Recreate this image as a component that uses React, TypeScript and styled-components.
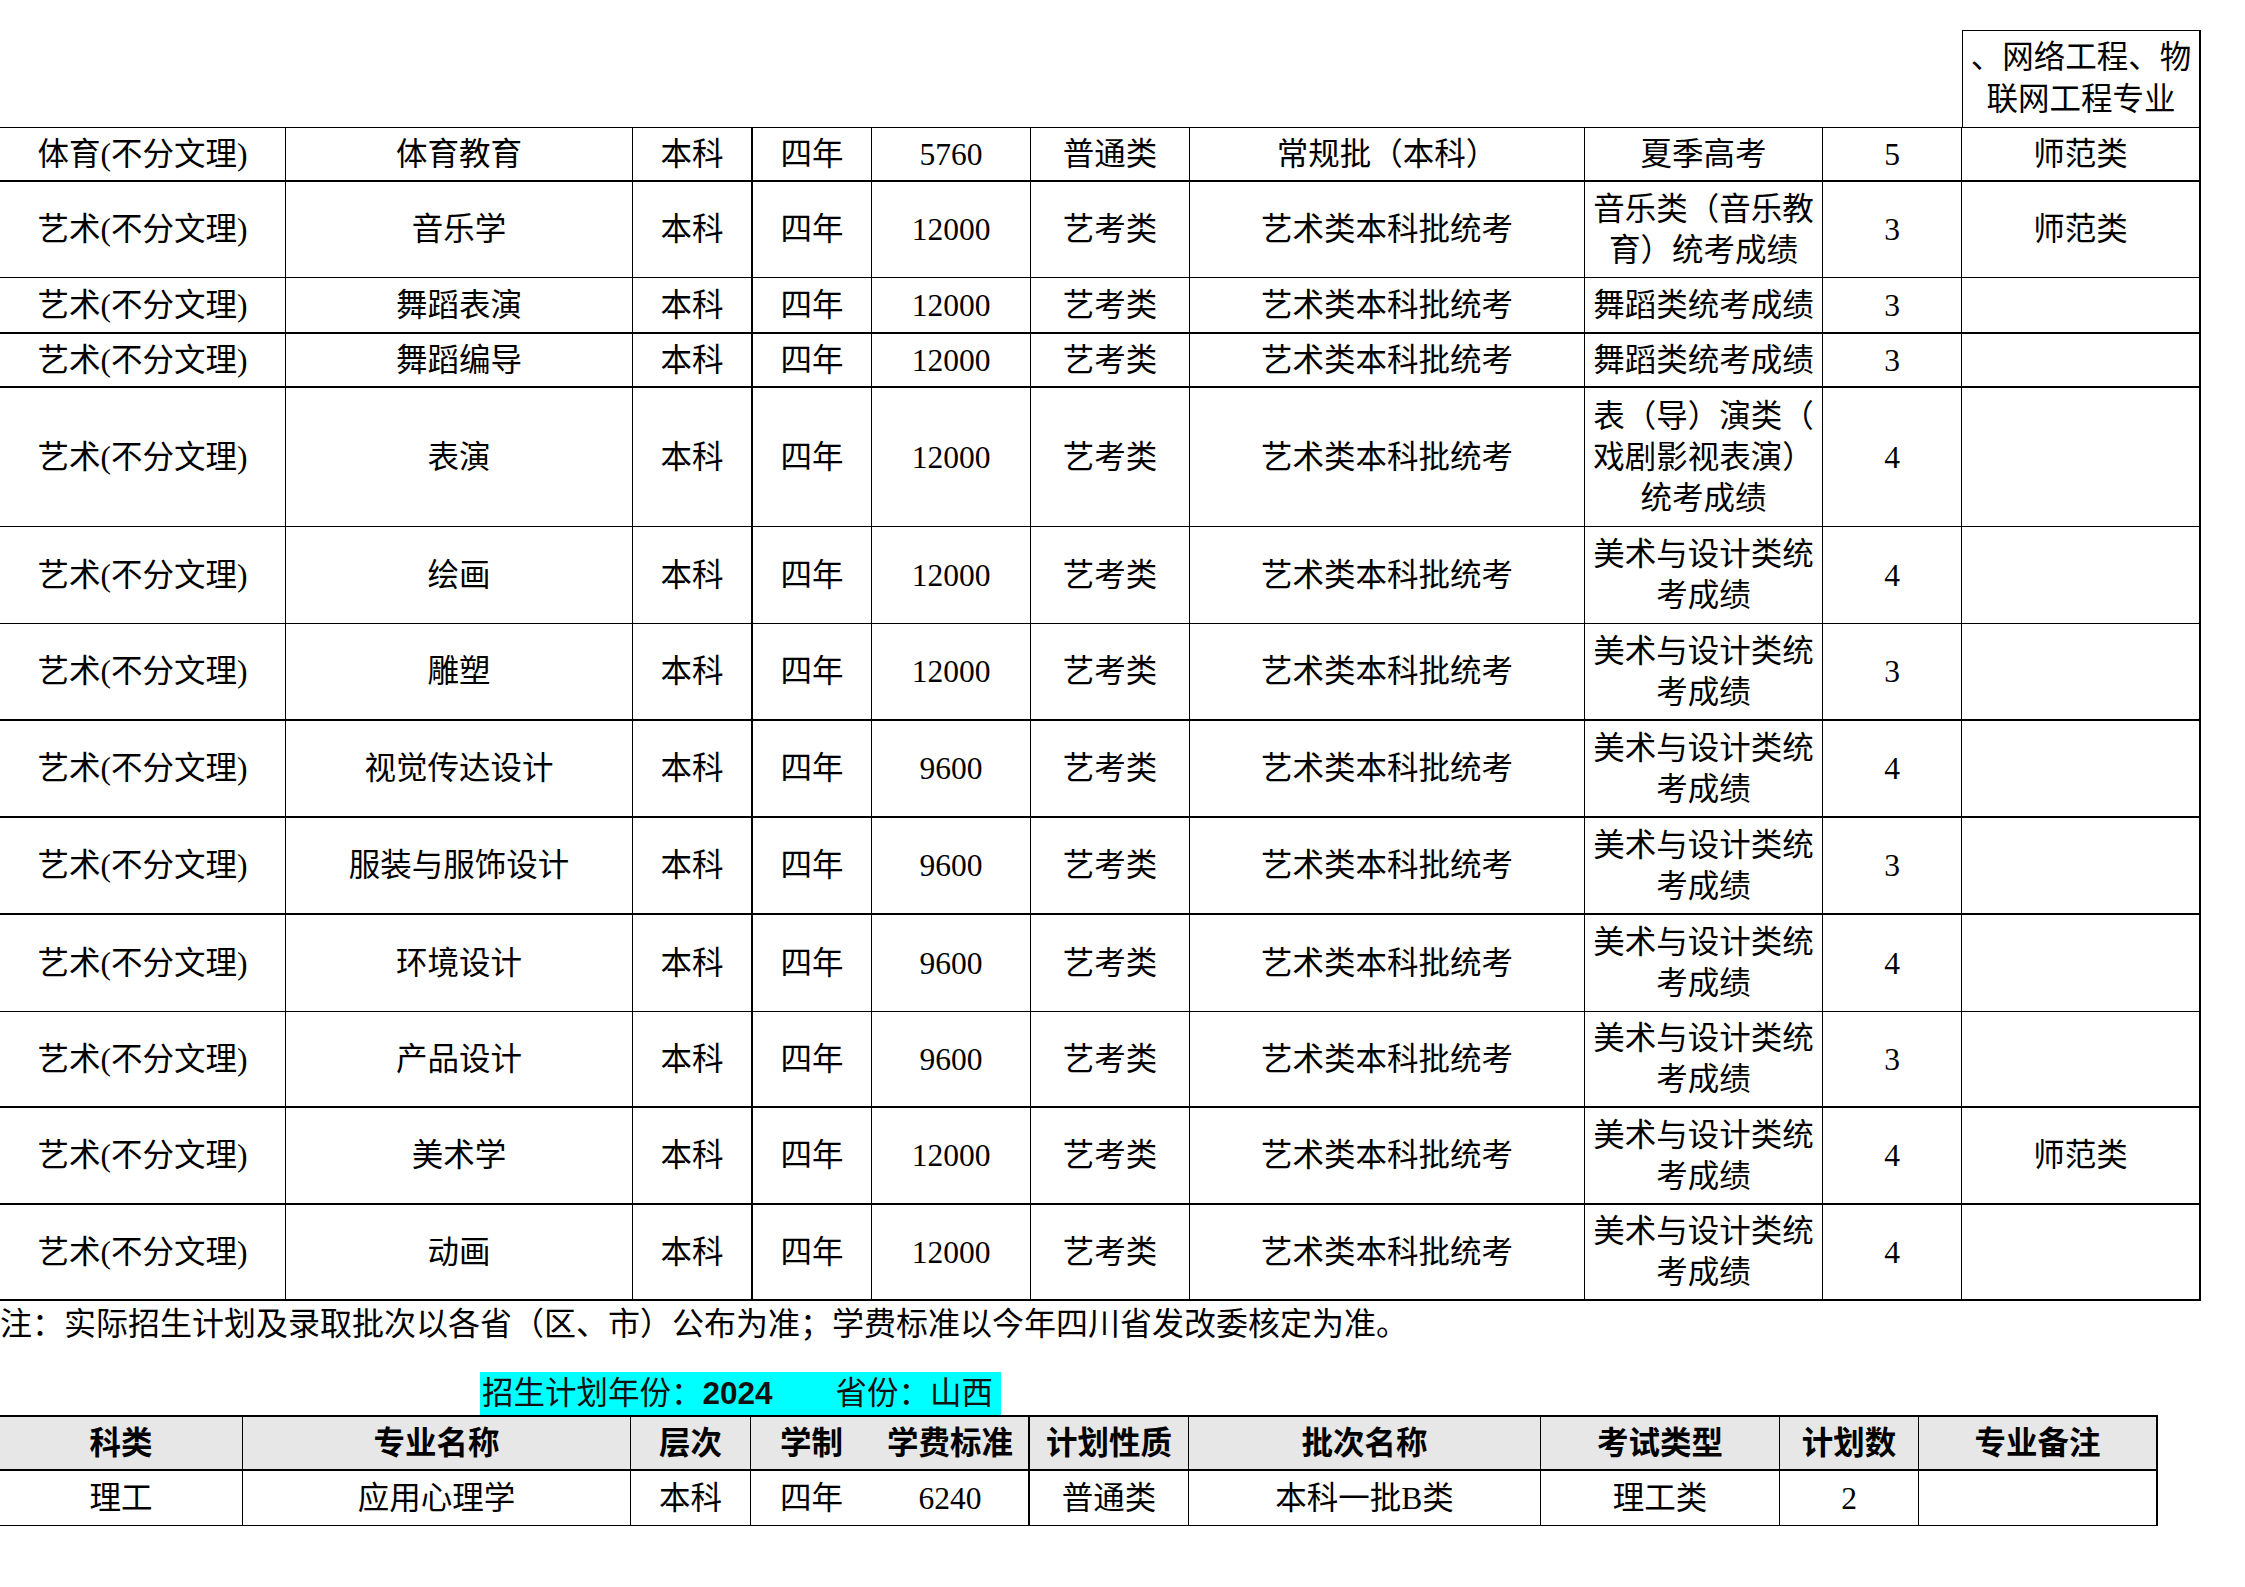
import React from 'react'
import styled, { createGlobalStyle } from 'styled-components'

const GlobalStyle = createGlobalStyle`
  html, body {
    margin: 0;
    padding: 0;
    background: #ffffff;
  }
  body {
    font-family: "Liberation Serif", "Noto Sans CJK SC", serif;
    color: #000000;
  }
`

const COLS_MAIN = '286px 347px 120px 119px 159px 159px 395px 238px 139px 239px'
const COLS_PLAN = '243px 388px 120px 121px 158px 159px 352px 239px 139px 239px'

const Page = styled.div`
  padding-top: 30px;
  width: 2245px;
  font-size: 31.5px;
`

const TopRow = styled.div`
  display: grid;
  grid-template-columns: ${COLS_MAIN};
  width: 2201px;
  height: 97px;
`

const CarryCell = styled.div`
  grid-column: 10;
  box-sizing: border-box;
  border-top: 1px solid #000;
  border-left: 1px solid #000;
  border-right: 2px solid #000;
  display: flex;
  flex-direction: column;
  align-items: center;
  justify-content: center;
  line-height: 42px;
  white-space: nowrap;
`

const Table = styled.div<{ $width: number; $top: number }>`
  width: ${({ $width }) => $width}px;
  border-top: ${({ $top }) => $top}px solid #000;
`

const Row = styled.div<{ $cols: string; $h: number; $b: number; $head?: boolean }>`
  display: grid;
  grid-template-columns: ${({ $cols }) => $cols};
  box-sizing: border-box;
  height: ${({ $h }) => $h}px;
  border-bottom: ${({ $b }) => $b}px solid #000;
  background: ${({ $head }) => ($head ? '#e7e7e7' : 'transparent')};
  font-weight: ${({ $head }) => ($head ? 700 : 400)};
`

const Cell = styled.div<{ $r: number }>`
  display: flex;
  flex-direction: column;
  align-items: center;
  justify-content: center;
  text-align: center;
  border-right: ${({ $r }) => $r}px solid #000;
  line-height: 41px;
  white-space: nowrap;
  overflow: visible;
`

const Note = styled.div`
  font-size: 32px;
  line-height: 46px;
  white-space: nowrap;
`

const TitleRow = styled.div`
  margin-top: 25px;
  padding-left: 480px;
  height: 43px;
`

const TitleMark = styled.span`
  display: inline-block;
  background: #00ffff;
  line-height: 43px;
  height: 43px;
  padding: 0 8px 0 2px;
  white-space: pre;
  color: #111;
`

const Year = styled.span`
  font-family: "Liberation Sans", "Noto Sans CJK SC", sans-serif;
  font-weight: 700;
`

type MainRow = {
  kind: string
  major: string
  fee: string
  nature: string
  batch: string
  exam: string[]
  count: string
  remark: string
  h: number
  thick: boolean
}

const art = (major: string, fee: string, exam: string[], count: string, h: number, thick: boolean, remark = ''): MainRow => ({
  kind: '艺术(不分文理)',
  major,
  fee,
  nature: '艺考类',
  batch: '艺术类本科批统考',
  exam,
  count,
  remark,
  h,
  thick
})

const fineArt = ['美术与设计类统', '考成绩']

const rows: MainRow[] = [
  {
    kind: '体育(不分文理)',
    major: '体育教育',
    fee: '5760',
    nature: '普通类',
    batch: '常规批（本科）',
    exam: ['夏季高考'],
    count: '5',
    remark: '师范类',
    h: 54,
    thick: true
  },
  art('音乐学', '12000', ['音乐类（音乐教', '育）统考成绩'], '3', 96, false, '师范类'),
  art('舞蹈表演', '12000', ['舞蹈类统考成绩'], '3', 56, true),
  art('舞蹈编导', '12000', ['舞蹈类统考成绩'], '3', 54, true),
  art('表演', '12000', ['表（导）演类（', '戏剧影视表演）', '统考成绩'], '4', 139, false),
  art('绘画', '12000', fineArt, '4', 97, false),
  art('雕塑', '12000', fineArt, '3', 97, true),
  art('视觉传达设计', '9600', fineArt, '4', 97, true),
  art('服装与服饰设计', '9600', fineArt, '3', 97, true),
  art('环境设计', '9600', fineArt, '4', 97, false),
  art('产品设计', '9600', fineArt, '3', 96, true),
  art('美术学', '12000', fineArt, '4', 97, true, '师范类'),
  art('动画', '12000', fineArt, '4', 96, true)
]

// right border width of each column
const mainBorders = [1, 1, 2, 1, 1, 1, 1, 1, 1, 2]
const planBorders = [1, 1, 1, 0, 2, 1, 1, 1, 1, 2]

const planHead = ['科类', '专业名称', '层次', '学制', '学费标准', '计划性质', '批次名称', '考试类型', '计划数', '专业备注']
const planRow = ['理工', '应用心理学', '本科', '四年', '6240', '普通类', '本科一批B类', '理工类', '2', '']

const App: React.FC = () => {
  return (
    <Page>
      <GlobalStyle />

      <TopRow>
        <CarryCell>
          <span>、网络工程、物</span>
          <span>联网工程专业</span>
        </CarryCell>
      </TopRow>

      <Table $width={2201} $top={1}>
        {rows.map((row, index) => {
          const cells = [
            [row.kind],
            [row.major],
            ['本科'],
            ['四年'],
            [row.fee],
            [row.nature],
            [row.batch],
            row.exam,
            [row.count],
            [row.remark]
          ]
          return (
            <Row key={index} $cols={COLS_MAIN} $h={row.h} $b={row.thick ? 2 : 1}>
              {cells.map((lines, c) => (
                <Cell key={c} $r={mainBorders[c]}>
                  {lines.map((line, l) => (
                    <span key={l}>{line}</span>
                  ))}
                </Cell>
              ))}
            </Row>
          )
        })}
      </Table>

      <Note>注：实际招生计划及录取批次以各省（区、市）公布为准；学费标准以今年四川省发改委核定为准。</Note>

      <TitleRow>
        <TitleMark>
          招生计划年份：<Year>2024</Year>{'　　'}省份：山西
        </TitleMark>
      </TitleRow>

      <Table $width={2158} $top={2}>
        <Row $cols={COLS_PLAN} $h={54} $b={2} $head>
          {planHead.map((text, c) => (
            <Cell key={c} $r={planBorders[c]}>{text}</Cell>
          ))}
        </Row>
        <Row $cols={COLS_PLAN} $h={55} $b={1}>
          {planRow.map((text, c) => (
            <Cell key={c} $r={planBorders[c]}>{text}</Cell>
          ))}
        </Row>
      </Table>
    </Page>
  )
}

export default App
